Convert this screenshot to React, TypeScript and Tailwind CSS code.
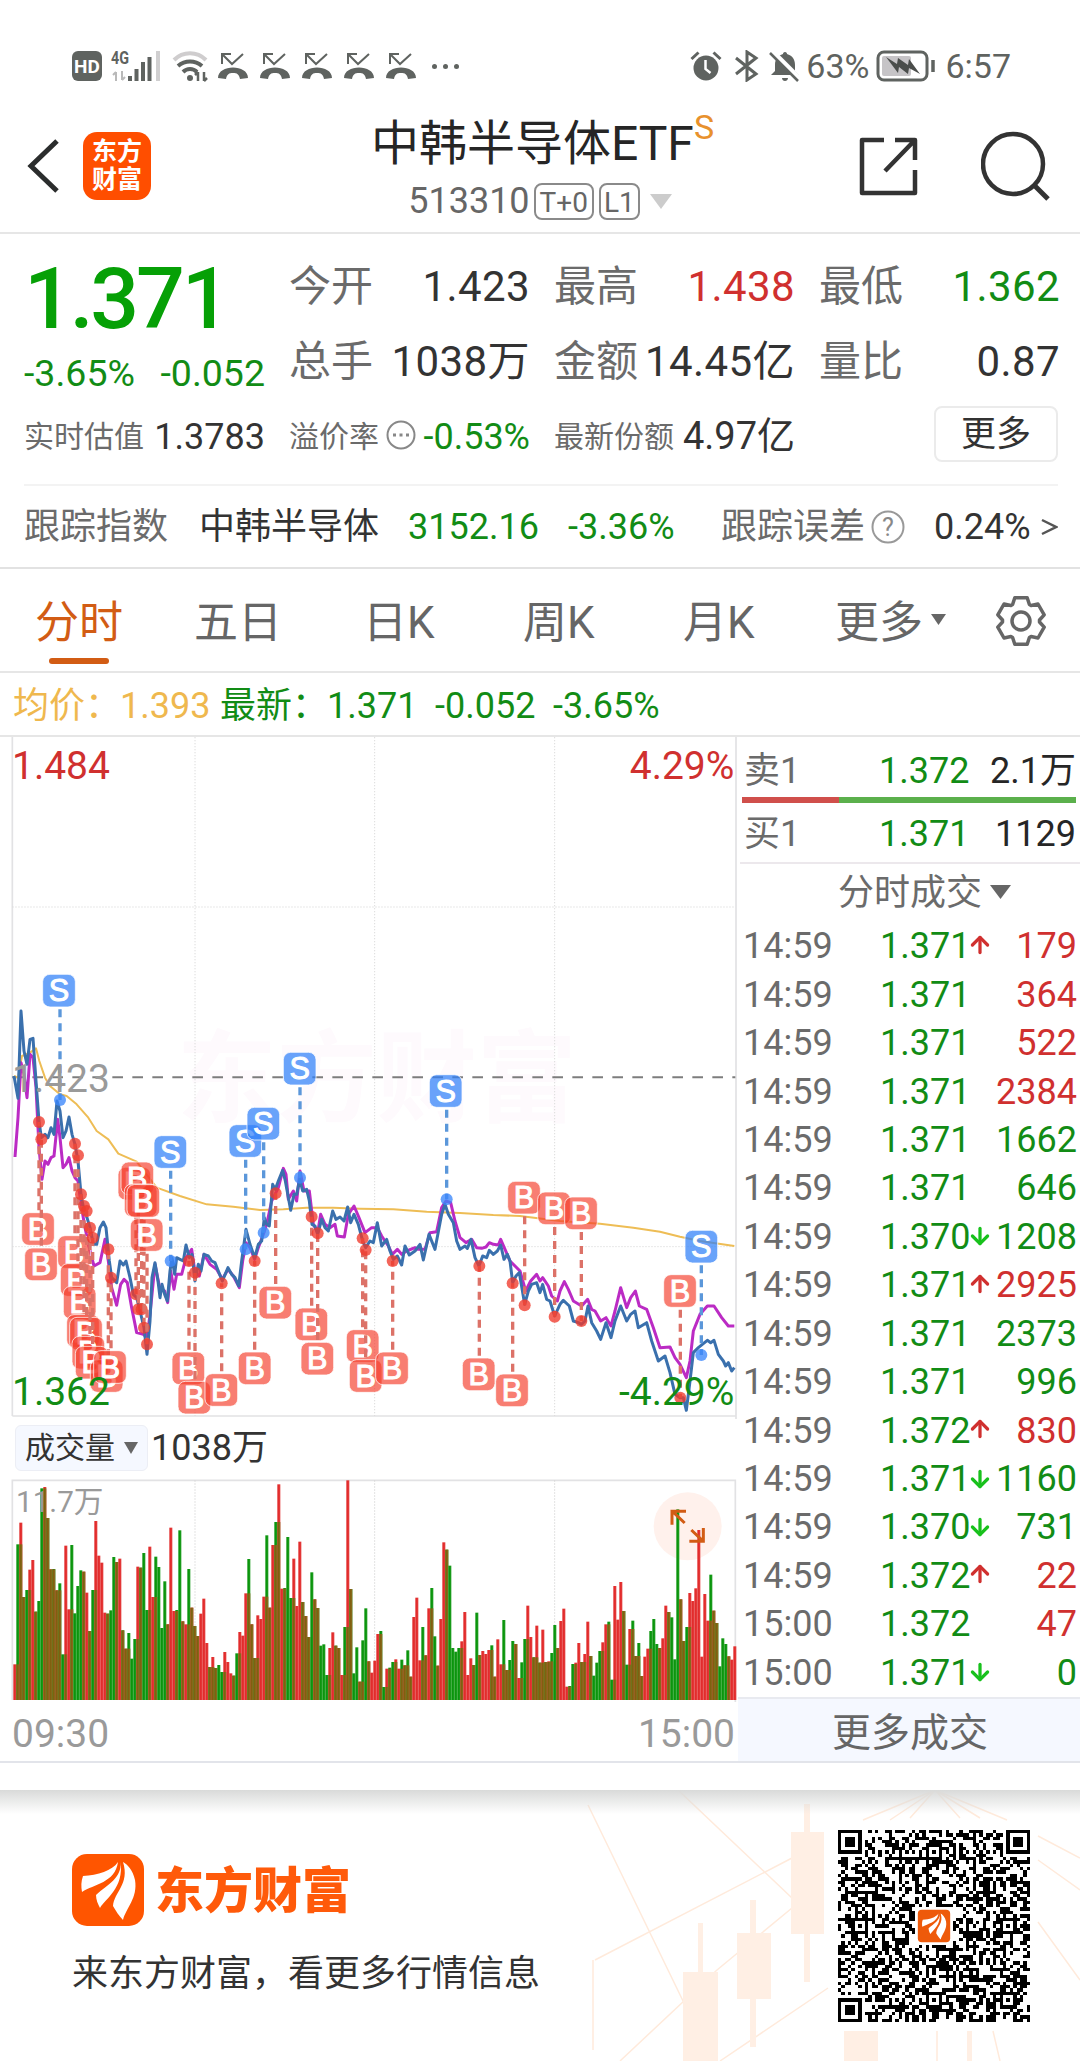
import { ReactNode } from 'react'
import { ArrowUp, ArrowDown } from 'lucide-react'

const FONT = "font-['Roboto','Noto_Sans_CJK_SC',sans-serif]"

const UP = 'text-[#d0302f]'
const DOWN = 'text-[#128c15]'

type Trade = { time: string; price: string; dir?: 'up' | 'down'; vol: string; buy: boolean }

const trades: Trade[] = [
  { time: '14:59', price: '1.371', dir: 'up', vol: '179', buy: true },
  { time: '14:59', price: '1.371', vol: '364', buy: true },
  { time: '14:59', price: '1.371', vol: '522', buy: true },
  { time: '14:59', price: '1.371', vol: '2384', buy: true },
  { time: '14:59', price: '1.371', vol: '1662', buy: false },
  { time: '14:59', price: '1.371', vol: '646', buy: false },
  { time: '14:59', price: '1.370', dir: 'down', vol: '1208', buy: false },
  { time: '14:59', price: '1.371', dir: 'up', vol: '2925', buy: true },
  { time: '14:59', price: '1.371', vol: '2373', buy: false },
  { time: '14:59', price: '1.371', vol: '996', buy: false },
  { time: '14:59', price: '1.372', dir: 'up', vol: '830', buy: true },
  { time: '14:59', price: '1.371', dir: 'down', vol: '1160', buy: false },
  { time: '14:59', price: '1.370', dir: 'down', vol: '731', buy: false },
  { time: '14:59', price: '1.372', dir: 'up', vol: '22', buy: true },
  { time: '15:00', price: '1.372', vol: '47', buy: true },
  { time: '15:00', price: '1.371', dir: 'down', vol: '0', buy: false },
]

// chart coordinates are three units per css pixel
const priceLine =
  '42,345 54,412 63,150 72,270 81,310 90,235 99,232 108,360 117,480 124,530 135,520 144,530 153,500 162,520 171,420 180,450 189,530 198,510 207,468 216,520 225,550 234,600 243,700 252,750 261,770 270,800 280,850 290,850 300,800 310,783 318,800 328,900 335,950 350,965 360,900 370,912 378,900 390,950 400,1000 410,1010 420,1050 432,1100 441,1180 450,1080 456,950 465,905 474,960 480,1010 486,970 494,1000 502,1020 510,930 516,890 524,940 530,890 540,895 550,900 558,852 568,890 576,880 585,960 595,910 603,930 612,880 625,885 635,900 645,905 655,930 667,960 684,920 695,940 705,950 716,975 725,900 738,805 750,850 764,890 775,850 785,840 793,770 800,790 808,795 818,670 826,685 835,660 848,628 856,660 872,748 882,700 890,700 899,655 908,690 920,685 928,720 936,790 945,795 953,820 965,775 975,800 985,810 998,750 1008,775 1020,768 1032,780 1043,738 1052,785 1062,760 1075,790 1088,840 1097,860 1110,840 1120,845 1132,785 1145,855 1160,835 1170,870 1180,895 1192,885 1205,912 1215,855 1228,882 1245,870 1260,850 1270,897 1287,820 1305,865 1325,760 1335,730 1345,760 1360,785 1370,840 1380,865 1395,855 1402,862 1413,835 1425,890 1437,915 1448,885 1460,890 1468,868 1480,880 1492,870 1502,852 1512,895 1522,880 1530,900 1538,965 1548,945 1558,935 1574,1030 1585,990 1595,970 1610,965 1620,995 1628,970 1640,1015 1650,1020 1664,1065 1680,1030 1690,1018 1708,1035 1720,1080 1735,1085 1744,1090 1755,1080 1764,1035 1775,1085 1790,1110 1802,1135 1818,1085 1833,1130 1845,1080 1862,1035 1880,1080 1892,1060 1905,1050 1915,1100 1940,1085 1955,1140 1975,1200 1995,1185 2010,1235 2025,1300 2040,1310 2050,1310 2059,1348 2070,1260 2080,1175 2095,1160 2122,1138 2132,1145 2142,1138 2155,1180 2170,1200 2177,1215 2185,1205 2195,1230 2203,1220'

const indexLine =
  '45,588 54,470 63,305 72,340 81,410 90,280 99,290 108,380 117,560 126,655 135,600 144,610 153,590 162,585 173,475 180,530 189,620 198,610 207,590 216,630 225,650 234,660 243,730 255,800 270,870 282,915 300,905 315,835 325,900 335,980 350,1033 362,970 372,955 382,965 395,1040 410,1115 430,1120 441,1130 450,1060 465,910 480,985 494,990 503,1025 512,930 522,985 530,940 545,940 558,890 575,865 585,935 598,945 612,880 630,910 650,925 667,955 684,925 700,945 718,980 728,900 738,845 750,860 764,895 775,860 790,820 800,790 815,720 835,680 850,622 858,640 865,715 880,690 890,720 900,630 912,690 928,690 940,790 953,815 962,760 975,790 990,800 1005,790 1012,825 1033,828 1045,760 1062,735 1075,765 1095,815 1115,800 1132,800 1145,825 1165,855 1177,880 1192,865 1205,880 1220,870 1245,860 1255,865 1275,865 1290,815 1310,812 1325,740 1338,720 1352,725 1365,780 1380,830 1398,845 1415,835 1430,860 1445,862 1458,858 1468,845 1480,850 1495,852 1502,835 1515,865 1530,900 1545,915 1560,930 1577,990 1592,960 1610,940 1620,960 1628,950 1645,975 1655,1005 1672,1020 1680,990 1693,962 1705,985 1720,1020 1745,1035 1763,1015 1775,1045 1785,1050 1802,1080 1818,1070 1833,1095 1845,1050 1862,980 1880,1040 1892,1010 1906,990 1918,1035 1940,1045 1960,1100 1980,1160 2010,1158 2025,1190 2040,1210 2059,1250 2070,1200 2080,1110 2100,1060 2122,1035 2142,1035 2165,1070 2185,1095 2203,1095'

const avgLine =
  '42,345 54,350 66,285 90,275 108,262 118,300 135,350 150,375 180,400 200,405 230,430 265,470 290,510 325,535 355,578 410,602 470,680 540,705 620,730 700,737 780,747 850,745 920,740 1000,740 1080,743 1180,745 1280,752 1380,756 1480,762 1560,765 1680,780 1800,788 1900,800 1980,812 2040,827 2100,840 2203,855'

type Mark = [kind: 'B' | 'S', boxX: number, boxY: number, dotX: number, dotY: number]

const marks: Mark[] = [
  ['S', 177, 89, 180, 417],
  ['B', 114, 804, 117, 483],
  ['B', 123, 910, 124, 535],
  ['B', 222, 873, 225, 548],
  ['B', 230, 957, 234, 583],
  ['B', 239, 1025, 243, 700],
  ['B', 249, 1110, 252, 735],
  ['B', 258, 1118, 260, 750],
  ['B', 265, 1175, 270, 800],
  ['B', 275, 1205, 278, 830],
  ['B', 320, 1245, 325, 865],
  ['B', 330, 1218, 333, 950],
  ['B', 403, 668, 408, 1000],
  ['B', 412, 652, 415, 1045],
  ['B', 422, 718, 425, 1045],
  ['B', 430, 720, 432, 1100],
  ['B', 440, 822, 441, 1150],
  ['S', 511, 573, 512, 900],
  ['B', 565, 1222, 567, 900],
  ['B', 583, 1310, 585, 935],
  ['B', 664, 1287, 665, 967],
  ['S', 736, 540, 737, 865],
  ['S', 790, 488, 791, 815],
  ['B', 764, 1222, 764, 900],
  ['B', 826, 1025, 827, 697],
  ['S', 899, 323, 900, 650],
  ['B', 934, 1090, 935, 767],
  ['B', 952, 1193, 953, 817],
  ['B', 1088, 1155, 1088, 832],
  ['B', 1097, 1245, 1097, 867],
  ['B', 1176, 1222, 1178, 900],
  ['S', 1337, 390, 1340, 715],
  ['B', 1436, 1240, 1438, 915],
  ['B', 1536, 1288, 1538, 967],
  ['B', 1572, 710, 1574, 1033],
  ['B', 1662, 742, 1664, 1067],
  ['B', 1743, 757, 1744, 1080],
  ['B', 2040, 990, 2041, 1310],
  ['S', 2104, 857, 2104, 1182],
]

// one entry per minute: colour and top edge, baseline is 867
const volume =
  'r760 g400 r335 g558 g537 r476 r447 g602 g570 g232 r228 g321 r475 g474 r538 g517 g730 r404 r595 g402 g607 g525 g478 r482 r545 g660 g537 r330 r434 r455 r605 g608 g598 g438 r453 r443 g658 r713 g666 g743 g684 r467 g470 g426 g597 r407 r558 g437 g468 g651 g511 r640 r350 r600 g597 g358 r631 r640 g474 r590 g645 r675 r608 r563 r696 g768 r738 g771 g762 g783 r723 r753 r787 g794 g727 r663 r674 r547 g444 r640 g741 r613 r624 r557 g373 r590 r402 g333 r220 r533 g531 g378 g561 r443 r585 r392 g573 r615 g678 g484 r565 g591 g704 g700 g792 r711 r664 g704 r711 r792 g648 r208 g534 g787 g709 r812 g688 g592 r751 r785 r749 r669 g660 g828 r773 g770 g753 r745 r773 g746 r763 g718 r797 r618 r560 r748 g648 r733 r592 g531 g676 r764 r624 r394 g416 g464 g711 g722 g711 r691 r603 r792 r742 g762 g605 r732 r720 r729 r717 g703 r797 r685 r760 g627 r777 g747 g690 r699 r801 g754 g684 r584 r678 g739 r644 g755 r656 g753 r751 g726 g642 r711 r630 r593 r827 g825 g759 r755 r696 g753 r729 r632 g735 g794 g755 g720 r694 r640 g632 g806 r525 r626 r513 g600 g761 r654 g629 r735 g696 r795 r737 r713 g660 g624 g699 r711 r682 r584 g603 g619 g745 g295 r565 g690 g648 r546 r570 r532 r357 r737 r549 r629 g491 r599 g636 g766 g682 g699 r736 r746 r706'
    .split(' ')
    .map((s) => ({ red: s[0] === 'r', top: Number(s.slice(1)) }))

function MissedCall() {
  return (
    <svg viewBox="0 0 32 28" className="w-8 h-7 mr-[10px]">
      <path d="M5 12V2h9M5 2l10 10L26 2" fill="none" stroke="#5f6360" strokeWidth="2" />
      <path d="M1 26C1 12 31 12 31 26L23 27C22 22 20 21 16 21 12 21 10 22 9 27z" fill="#5f6360" />
    </svg>
  )
}

function StatusBar() {
  return (
    <div className="h-[100px] pt-8 pl-[72px] pr-[69px] flex items-center text-[#5f6360]">
      <div className="w-[30px] h-[30px] rounded-[6px] bg-[#5f6360] text-white text-[19px] font-bold leading-[31px] text-center">HD</div>
      <svg viewBox="0 0 54 34" className="w-[54px] h-[34px] ml-[9px] overflow-visible">
        <text x="0" y="15" fontSize="18" fontWeight="700" fill="#5f6360" textLength="18" lengthAdjust="spacingAndGlyphs">4G</text>
        <path d="M5 32V23M2 26l3-3M11 22v9M14 28l-3 3" stroke="#b9b9b9" strokeWidth="2" />
        <path d="M19 32v-5M25.5 32V20M32 32V13M38.5 32V8" stroke="#5f6360" strokeWidth="4" />
        <path d="M47 32V2" stroke="#d0cfd0" strokeWidth="4" />
      </svg>
      <svg viewBox="0 0 38 32" className="w-[38px] h-8 ml-[7px] mr-[7px]">
        <path d="M2 10c9-9 23-9 32 0" fill="none" stroke="#cfcdce" strokeWidth="4" />
        <path d="M6 16c7-6 17-6 24 0M11 22c4-4 10-4 14 0" fill="none" stroke="#5f6360" strokeWidth="4" />
        <circle cx="18" cy="28" r="3" fill="#5f6360" />
        <path d="M26 31v-9M32 22v9M23 25l3-3M35 28l-3 3" fill="none" stroke="#5f6360" strokeWidth="2.5" />
      </svg>
      {[0, 1, 2, 3, 4].map((i) => (
        <MissedCall key={i} />
      ))}
      <div className="flex gap-[6px] ml-[5px]">
        <i className="w-[5px] h-[5px] rounded-full bg-[#5f6360]" />
        <i className="w-[5px] h-[5px] rounded-full bg-[#5f6360]" />
        <i className="w-[5px] h-[5px] rounded-full bg-[#5f6360]" />
      </div>
      <svg viewBox="0 0 32 32" className="w-8 h-8 ml-auto">
        <circle cx="16" cy="18" r="12.5" fill="#5f6360" />
        <path d="M15.5 10v9l5 4" fill="none" stroke="#fff" strokeWidth="2.5" />
        <path d="M1.5 9l7-6.5M30.5 9l-7-6.5" stroke="#5f6360" strokeWidth="3" />
      </svg>
      <svg viewBox="0 0 25 32" className="w-[25px] h-8 ml-3">
        <path d="M2 8l20 16-9 6V2l9 6L2 24" fill="none" stroke="#5f6360" strokeWidth="3" />
      </svg>
      <svg viewBox="0 0 32 34" className="w-8 h-[34px] ml-[10px] mr-[5px]">
        <path d="M16 3c-1.5 0-2 1-2 2-5 1.5-8 5-8 11v6l-4 4h28l-4-4v-6c0-6-3-9.5-8-11 0-1-.5-2-2-2zM13 29h6c0 4-6 4-6 0z" fill="#5f6360" />
        <path d="M3 2l27 27" stroke="#fff" strokeWidth="5" />
        <path d="M1 4l28 28" stroke="#5f6360" strokeWidth="2.5" />
      </svg>
      <span className="text-[34px] leading-10">63%</span>
      <svg viewBox="0 0 60 32" className="w-[60px] h-8 ml-[7px]">
        <rect x="2" y="2" width="49" height="28" rx="6" fill="none" stroke="#5f6360" strokeWidth="3" />
        <rect x="6" y="6" width="29" height="20" rx="2" fill="#c6c4c7" />
        <path d="M10 7l11 7 1-6 10 7 1-6 11 15-11-6-1 6-9-7-1 6z" fill="#4a4d4b" />
        <path d="M57 10v12" stroke="#5f6360" strokeWidth="3.5" />
      </svg>
      <span className="text-[34px] leading-10 ml-[9px]">6:57</span>
    </div>
  )
}

function Header() {
  return (
    <div className="h-[134px] border-b-2 border-[#e6e6e6] grid grid-cols-[300px_1fr_300px]">
      <div className="flex items-center pl-[26px]">
        <svg viewBox="0 0 34 56" className="w-[34px] h-14">
          <path d="M31 3L5 28l26 25" fill="none" stroke="#2b2d2d" strokeWidth="5" />
        </svg>
        <div className="ml-[23px] w-[68px] h-[68px] rounded-[14px] bg-[#ff4e00] text-white text-[25px] leading-[28px] font-bold text-center pt-[6px]">
          东方
          <br />
          财富
        </div>
      </div>
      <div className="flex flex-col items-center">
        <div className="h-[85px] leading-[88px] text-[48px] text-[#262626] whitespace-nowrap flex pl-[5px]">
          中韩半导体ETF<span className="text-[34px] leading-[54px] text-[#e8912d]">S</span>
        </div>
        <div className="h-[36px] -mt-[2px] flex items-center text-[36px] leading-[36px] text-[#666]">
          513310
          <span className="ml-[4px] h-[37px] px-[4px] border-2 border-[#8a8a8a] rounded-[8px] text-[28px] leading-[35px]">T+0</span>
          <span className="ml-[5px] h-[37px] px-[3px] border-2 border-[#8a8a8a] rounded-[8px] text-[28px] leading-[35px]">L1</span>
          <svg viewBox="0 0 22 15" className="w-[22px] h-[15px] ml-[10px]">
            <path d="M0 0h22L11 15z" fill="#ccc" />
          </svg>
        </div>
      </div>
      <div className="flex items-center justify-end pr-[29px] gap-[62px]">
        <svg viewBox="0 0 60 60" className="w-[60px] h-[60px]">
          <path d="M25 4H3v53h53V34M36 4h20v20M56 4L26 35" fill="none" stroke="#333" strokeWidth="4.5" strokeLinejoin="round" />
        </svg>
        <svg viewBox="0 0 70 70" className="w-[70px] h-[70px]">
          <circle cx="32" cy="33" r="30" fill="none" stroke="#333" strokeWidth="4.5" />
          <path d="M53 54l14 14" stroke="#333" strokeWidth="5" />
        </svg>
      </div>
    </div>
  )
}

type StatProps = { label: string; color?: string; children: ReactNode }

function Stat({ label, color = 'text-[#333]', children }: StatProps) {
  return (
    <div className="flex justify-between items-center text-[42px] leading-[50px] whitespace-nowrap">
      <span className="text-[#6b6b6b]">{label}</span>
      <span className={`-mr-[2px] tracking-[0.4px] ${color}`}>{children}</span>
    </div>
  )
}

function SmallStat({ label, color = 'text-[#333]', icon, children }: StatProps & { icon?: ReactNode }) {
  return (
    <div className="flex justify-between items-center text-[36px] leading-[44px] whitespace-nowrap pt-[6px]">
      <span className="text-[#6b6b6b] text-[30px] flex items-center">
        {label}
        {icon}
      </span>
      <span className={`-mr-[2px] ${color}`}>{children}</span>
    </div>
  )
}

function Quote() {
  return (
    <div className="h-[335px] border-b-2 border-[#e2e2e2] pl-[24px] pr-[22px] text-[#333]">
      <div className="h-[252px] border-b-2 border-[#f3f3f3] pt-[15px] grid grid-cols-4 gap-x-[26px] grid-rows-[75px_75px_69px]">
        <div className="row-span-2 text-[#06a006] pt-[5px]">
          <div className="text-[86px] leading-[90px] font-medium tracking-[-3.2px]">1.371</div>
          <div className={`flex justify-between text-[37.5px] leading-[44px] pt-[7px] ${DOWN}`}>
            <span>-3.65%</span>
            <span className="-mr-[2px]">-0.052</span>
          </div>
        </div>
        <Stat label="今开">1.423</Stat>
        <Stat label="最高" color={UP}>1.438</Stat>
        <Stat label="最低" color={DOWN}>1.362</Stat>
        <Stat label="总手">1038万</Stat>
        <Stat label="金额">14.45亿</Stat>
        <Stat label="量比">0.87</Stat>
        <SmallStat label="实时估值">1.3783</SmallStat>
        <SmallStat
          label="溢价率"
          color={DOWN}
          icon={
            <svg viewBox="0 0 30 30" className="w-[30px] h-[30px] ml-[7px] -mt-[4px]">
              <circle cx="15" cy="15" r="13.5" fill="none" stroke="#888" strokeWidth="2" />
              <path d="M7 15h3M13.5 15h3M20 15h3" stroke="#888" strokeWidth="3" />
            </svg>
          }
        >
          -0.53%
        </SmallStat>
        <SmallStat label="最新份额">
          <span className="text-[38px]">4.97亿</span>
        </SmallStat>
        <div className="flex justify-end items-center">
          <div className="w-[124px] h-[56px] border-2 border-[#ebebeb] rounded-[8px] text-[35px] leading-[54px] text-center">更多</div>
        </div>
      </div>
      <div className="h-[81px] flex items-center text-[36px] leading-[44px] whitespace-nowrap">
        <span className="w-[175px] text-[#6b6b6b]">跟踪指数</span>
        <span className="w-[209px]">中韩半导体</span>
        <span className={`w-[160px] ${DOWN}`}>3152.16</span>
        <span className={`w-[153px] ${DOWN}`}>-3.36%</span>
        <span className="text-[#6b6b6b]">跟踪误差</span>
        <svg viewBox="0 0 34 34" className="w-[34px] h-[34px] ml-[6px]">
          <circle cx="17" cy="17" r="15.5" fill="none" stroke="#999" strokeWidth="2" />
          <text x="17" y="26" fontSize="25" textAnchor="middle" fill="#888">?</text>
        </svg>
        <span className="ml-[29px]">0.24%</span>
        <svg viewBox="0 0 18 18" className="w-[18px] h-[18px] ml-auto">
          <path d="M2 2l14 7-14 7" fill="none" stroke="#555" strokeWidth="2.5" />
        </svg>
      </div>
    </div>
  )
}

const gearPath =
  Array.from({ length: 6 }, (_, i) => i * 60)
    .flatMap((a) => [[a - 27, 18.5], [a - 15, 24], [a + 15, 24], [a + 27, 18.5]])
    .map(([a, r], i) => {
      const t = ((a - 90) * Math.PI) / 180
      return `${i ? 'L' : 'M'}${(26 + r * Math.cos(t)).toFixed(1)} ${(26 + r * Math.sin(t)).toFixed(1)}`
    })
    .join('') + 'z'

function Tabs() {
  return (
    <div className="h-[104px] border-b-2 border-[#e6e6e6] flex text-[44px] leading-[108px] text-[#666] whitespace-nowrap">
      <div className="w-[159px] pl-[35px] text-[#d25c14]">
        <div className="h-[89px] leading-[108px]">分时</div>
        <div className="w-[60px] h-[6px] ml-[14px] rounded-full bg-[#d25c14]" />
      </div>
      <span className="w-[204px] pl-[35px]">五日</span>
      <span className="w-[160px]">日K</span>
      <span className="w-[160px]">周K</span>
      <span className="w-[152px]">月K</span>
      <span>更多</span>
      <svg viewBox="0 0 15 11" className="w-[15px] h-[11px] ml-[8px] mt-[45px]">
        <path d="M0 0h15L7.5 11z" fill="#666" />
      </svg>
      <svg viewBox="0 0 52 52" className="w-[52px] h-[52px] ml-auto mr-[33px] mt-[26px]" fill="none" stroke="#666" strokeWidth="3.5">
        <path d={gearPath} strokeLinejoin="round" />
        <circle cx="26" cy="26" r="9" />
      </svg>
    </div>
  )
}

function Summary() {
  return (
    <div className={`h-[64px] border-b-2 border-[#e6e6e6] flex items-center pl-[13px] pt-[3px] text-[36px] leading-[44px] whitespace-nowrap ${DOWN}`}>
      <span className="w-[107px] text-[#efb84e]">均价：</span>
      <span className="w-[100px] text-[#efb84e]">1.393</span>
      <span className="w-[107px]">最新：</span>
      <span className="w-[108px]">1.371</span>
      <span className="w-[118px]">-0.052</span>
      <span>-3.65%</span>
    </div>
  )
}

function Marker({ mark }: { mark: Mark }) {
  const [kind, bx, by, dx, dy] = mark
  const buy = kind === 'B'
  const dir = by < dy ? 1 : -1
  return (
    <g>
      <line x1={dx} x2={dx} y1={by + dir * 56} y2={dy} stroke={buy ? '#dc7268' : '#5b97da'} strokeWidth="10" strokeDasharray="24 18" />
      <circle cx={dx} cy={dy} r="18" fill={buy ? '#f03a2b' : '#3b86fb'} fillOpacity="0.78" />
      <rect x={bx - 49} y={by - 49} width="98" height="98" rx="22" fill={buy ? '#f53b29' : '#2f7ff8'} fillOpacity={buy ? 0.66 : 0.72} stroke="#fff" strokeOpacity="0.75" strokeWidth="3" />
      <text x={bx} y={by + 32} textAnchor="middle" fontSize="92" fontWeight="500" fill="#fff" fontFamily="Liberation Sans" stroke="#fff" strokeWidth="3">
        {kind}
      </text>
    </g>
  )
}

function PriceChart() {
  return (
    <svg viewBox="0 -672 2220 2046" className="block w-[740px] h-[682px]" fontFamily="Roboto, sans-serif">
      <text x="530" y="460" fontSize="300" fontWeight="700" fill="#fefafd" fontFamily="Noto Sans CJK SC, sans-serif">东方财富</text>
      <path d="M37 -672V1365M37 1365H2206M2208 -672V1374" fill="none" stroke="#e2e2e4" strokeWidth="5" />
      <path d="M585 -672V1365M1124 -672V1365M1664 -672V1365M37 -162H2206M37 857H2206" stroke="#dcdcdc" strokeWidth="3" strokeDasharray="4 5" />
      <path d="M37 349H2206" stroke="#7d7d7d" strokeWidth="6" strokeDasharray="32 28" />
      <g fill="none" strokeLinejoin="round">
        <polyline points={avgLine} stroke="#eebd55" strokeWidth="6" />
        <polyline points={indexLine} stroke="#bb2bc4" strokeWidth="9" />
        <polyline points={priceLine} stroke="#3a70ad" strokeWidth="9" />
      </g>
      {marks.map((m, i) => (
        <Marker key={i} mark={m} />
      ))}
      <g fontSize="117">
        <text x="36" y="-547" fill="#d0302f">1.484</text>
        <text x="2203" y="-547" fill="#d0302f" textAnchor="end">4.29%</text>
        <text x="36" y="392" fill="#9a9a9a">1.423</text>
        <text x="36" y="1332" fill="#128c15">1.362</text>
        <text x="2203" y="1332" fill="#128c15" textAnchor="end">-4.29%</text>
      </g>
    </svg>
  )
}

function VolumeChart() {
  return (
    <svg viewBox="0 204 2220 669" className="block w-[740px] h-[223px]">
      <path d="M37 867V208H2206V873" fill="none" stroke="#e2e2e4" strokeWidth="5" />
      <path d="M585 208V867M1124 208V867M1664 208V867" stroke="#d4d4d4" strokeWidth="3" strokeDasharray="4 5" />
      <circle cx="2063" cy="346" r="102" fill="#fff1ec" />
      {volume.map((v, i) => {
        const prev = volume[i - 1]
        const x = 40 + i * 9
        const mixed = prev && prev.red !== v.red
        const mixTop = mixed ? Math.max(prev.top, v.top) : 867
        return (
          <g key={i}>
            <rect x={x} y={v.top} width="9" height={867 - v.top} fill={v.red ? '#e22c2c' : '#0b950d'} />
            {mixed && <rect x={x} y={mixTop} width="9" height={867 - mixTop} fill="#80600f" />}
            <rect x={x + 7.5} y={v.top} width="1.5" height={867 - v.top} fill="#fff" fillOpacity="0.3" />
          </g>
        )
      })}
      <text x="48" y="303" fontSize="89" fill="#9a9a9a">11.7万</text>
      <path d="M2016 341v-40h42M2018 302l36 34M2074 357l36 34M2068 391h42v-40" fill="none" stroke="#d25c14" strokeWidth="9" />
    </svg>
  )
}

function VolumeHeader() {
  return (
    <div className="h-[60px] pt-[6px] flex pl-[15px] text-[#333]">
      <div className="w-[133px] h-[46px] rounded-[6px] border border-[#eceef5] bg-[#f5f8ff] flex items-center pl-[9px] text-[30px] leading-[44px]">
        成交量
        <svg viewBox="0 0 14 12" className="w-[14px] h-3 ml-[9px]">
          <path d="M0 0h14L7 12z" fill="#666" />
        </svg>
      </div>
      <span className="ml-[3px] text-[36px] leading-[46px]">1038万</span>
    </div>
  )
}

function OrderRow({ side, price, vol }: { side: string; price: string; vol: string }) {
  return (
    <div className="flex pl-[4px] pr-[4px] text-[36px] leading-[44px] whitespace-nowrap">
      <span className="w-[135px] text-[#6b6b6b]">{side}</span>
      <span className={DOWN}>{price}</span>
      <span className="ml-auto text-[#262626]">{vol}</span>
    </div>
  )
}

function TradePanel() {
  return (
    <div className="w-[340px] flex flex-col">
      <div className="pt-[12px] shrink-0">
        <OrderRow side="卖1" price="1.372" vol="2.1万" />
        <div className="h-[6px] ml-[2px] mr-[4px] mt-[4px] mb-[9px] bg-[#5bb04c] flex">
          <div className="w-[97px] bg-[#d04f4b]" />
        </div>
        <OrderRow side="买1" price="1.371" vol="1129" />
      </div>
      <div className="shrink-0 mt-[6px] border-t-2 border-[#ece8ec] h-[60px] flex items-center justify-center text-[36px] leading-[44px] text-[#6b6b6b] pl-[29px]">
        分时成交
        <svg viewBox="0 0 21 14" className="w-[21px] h-[14px] ml-[8px] -mt-[3px]">
          <path d="M0 0h21L10.5 14z" fill="#666" />
        </svg>
      </div>
      {trades.map((t, i) => (
        <div key={i} className="shrink-0 h-[48.44px] flex items-center pl-[3px] pr-[3px] text-[36px] leading-[48px]">
          <span className="w-[137px] text-[#6b6b6b]">{t.time}</span>
          <span className={DOWN}>{t.price}</span>
          {t.dir === 'up' && <ArrowUp className="w-[26px] h-[26px] -ml-[3px] -mt-[3px] text-[#d0302f]" strokeWidth={3} />}
          {t.dir === 'down' && <ArrowDown className="w-[26px] h-[26px] -ml-[3px] -mt-[1px] text-[#18c11c]" strokeWidth={3} />}
          <span className={`ml-auto ${t.buy ? UP : DOWN}`}>{t.vol}</span>
        </div>
      ))}
      <div className="shrink-0 mt-auto h-[64px] -ml-[2px] border-t-2 border-[#e8eaf0] bg-[#f5f8ff] text-[39px] leading-[68px] text-[#666] text-center pl-[2px]">更多成交</div>
    </div>
  )
}

function Feathers() {
  return (
    <g fill="#fff">
      <path d="M46 8C40 17 26 21 11 22 9 27 9 33 10 38 22 30 43 29 46 8z" />
      <path d="M48.5 8C50 24 36 30 24 41 24 46 26 50 28 54 34 44 52 34 48.5 8z" />
      <path d="M51 8C58 30 42 38 41 52 44 57 47 62 51 66 54 54 66 44 63 26 61 16 55 10 51 8z" />
    </g>
  )
}

const QR_SIZE = 57

// concentric squares: three corner finders, five small alignment marks
function qrPattern(x: number, y: number) {
  const dist = ([cx, cy]: number[]) => Math.max(Math.abs(x - cx), Math.abs(y - cy))
  for (const c of [[3, 3], [53, 3], [3, 53]]) {
    const d = dist(c)
    if (d <= 4) return d === 3 || d <= 1
  }
  for (const c of [[28, 6], [6, 28], [50, 28], [28, 50], [50, 50]]) {
    const d = dist(c)
    if (d <= 2) return d !== 1
  }
  return null
}

function qrPath() {
  let seed = 20713
  let d = ''
  for (let y = 0; y < QR_SIZE; y++) {
    for (let x = 0; x < QR_SIZE; x++) {
      seed = (seed * 48271) % 2147483647
      const center = Math.abs(x - 28) < 6 && Math.abs(y - 28) < 6
      const on = qrPattern(x, y) ?? (!center && (x === 6 || y === 6 ? (x + y) % 2 === 0 : seed / 2147483647 < 0.5))
      if (on) d += `M${x} ${y}h1v1h-1z`
    }
  }
  return d
}

function QrCode() {
  return (
    <div className="w-[204px] h-[204px] bg-white flex items-center justify-center">
      <svg viewBox="0 0 57 57" className="w-[192px] h-[192px]" shapeRendering="crispEdges">
        <path d={qrPath()} fill="#000" />
        <g shapeRendering="auto">
          <rect x="23.7" y="23.7" width="9.6" height="9.6" rx="1.2" fill="#ee5a0a" />
          <g transform="translate(23.7 23.7) scale(0.133)">
            <Feathers />
          </g>
        </g>
      </svg>
    </div>
  )
}

function Footer() {
  return (
    <div className="relative h-[271px] overflow-hidden">
      <svg viewBox="0 0 520 271" className="absolute right-0 top-0 w-[520px] h-[271px]">
        <path
          d="M28 15l96 198M118 0l114 108M35 170L232 68M60 271l97-91 75-62M160 271l108-73M33 170v90M375 0l-72 30M375 0l-45 30M375 0l-25 28M375 0l25 28M375 0l45 28M375 0l72 30M478 46l42 22M478 70l42 30M478 132l42 58M377 241v30M433 241l7 30"
          stroke="#ffeadb"
          strokeWidth="1.5"
          fill="none"
        />
        <g fill="#ffefe4">
          <rect x="123" y="182" width="35" height="89" />
          <rect x="138" y="133" width="5" height="49" />
          <rect x="177" y="143" width="34" height="66" />
          <rect x="190" y="110" width="6" height="33" />
          <rect x="190" y="209" width="6" height="48" />
          <rect x="231" y="42" width="33" height="102" />
          <rect x="244" y="14" width="6" height="28" />
          <rect x="244" y="144" width="6" height="48" />
          <rect x="284" y="241" width="34" height="30" />
          <rect x="407" y="241" width="5" height="30" />
        </g>
      </svg>
      <div className="absolute inset-x-0 top-0 h-6 bg-gradient-to-b from-[#d9dad9] to-transparent" />
      <div className="relative flex justify-between pl-[72px] pr-[44px]">
        <div className="pt-[63px]">
          <div className="flex items-center">
            <svg viewBox="0 0 72 72" className="w-[72px] h-[72px]">
              <rect width="72" height="72" rx="15" fill="#ff5500" />
              <Feathers />
            </svg>
            <span className="ml-[11px] text-[49px] leading-[76px] pt-[1px] -mb-[4px] font-black text-[#ff5a0a]">东方财富</span>
          </div>
          <div className="mt-[26px] text-[36px] leading-[44px] text-[#333]">来东方财富，看更多行情信息</div>
        </div>
        <div className="pt-[34px]">
          <QrCode />
        </div>
      </div>
    </div>
  )
}

export default function App() {
  return (
    <div className={`w-[1080px] h-[2061px] bg-white overflow-hidden ${FONT}`}>
      <StatusBar />
      <Header />
      <Quote />
      <Tabs />
      <Summary />
      <div className="flex h-[1026px] border-b-2 border-[#e2e4ea]">
        <div className="w-[740px]">
          <PriceChart />
          <VolumeHeader />
          <VolumeChart />
          <div className="flex justify-between pl-[12px] pr-[5px] pt-[8px] text-[39px] leading-[48px] text-[#9a9a9a]">
            <span>09:30</span>
            <span>15:00</span>
          </div>
        </div>
        <TradePanel />
      </div>
      <div className="h-[27px]" />
      <Footer />
    </div>
  )
}
